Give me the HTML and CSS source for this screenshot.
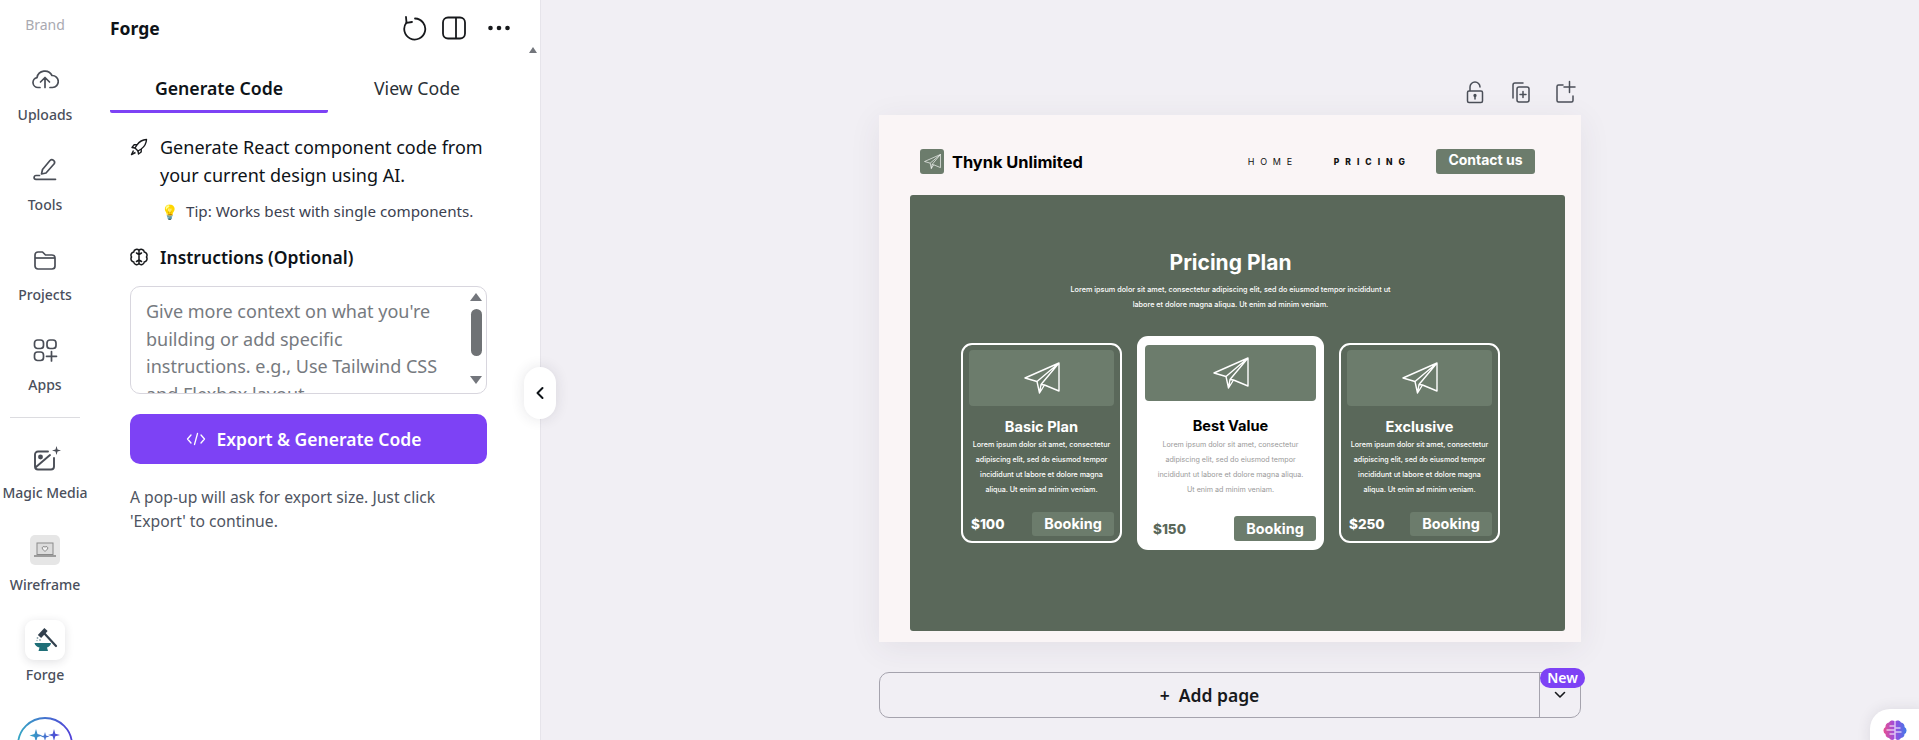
FILE: index.html
```html
<!DOCTYPE html>
<html>
  <head>
    <meta charset="utf-8" />
    <title>Forge</title>
    <link rel="stylesheet" href="styles.css">
  </head>
  <body>
    <svg class="defs" width="0" height="0">
      <symbol id="plane" viewBox="0 0 36 32">
        <path d="M35 1 1 16l12 3.500 2.500 11.500 5-8L35 29ZM35 1 13 19.500M35 1 17 22.500l3.500.5M15.500 31 17 22.500" fill="none" stroke="currentColor" stroke-width="1.400" stroke-linejoin="round" />
      </symbol>
    </svg>
    <div class="app">
      <nav class="sidebar">
        <div class="brand">Brand</div>
        <div class="side-item">
          <div class="side-icon">
            <svg width="28" height="24" viewBox="0 1 28 24" fill="none" stroke="#4a4e57" stroke-width="1.700" stroke-linecap="round" stroke-linejoin="round"><path d="M9 20.500H7a5 5 0 0 1-1-9.900A8 8 0 0 1 21 8.500a6 6 0 0 1 .5 12H19" /><path d="M14 20.500V11M9.500 15l4.500-4.500 4.500 4.500" /></svg>
          </div>
          <div class="side-label">Uploads</div>
        </div>
        <div class="side-item">
          <div class="side-icon">
            <svg width="26" height="26" viewBox="0 0 26 26" fill="none" stroke="#4a4e57" stroke-width="1.700" stroke-linecap="round" stroke-linejoin="round"><path d="M9.500 17l1-4.500L18 3.500a2.700 2.700 0 0 1 4.200 3.300L14 16Z" /><path d="M7.500 18.500H4a1.900 1.900 0 0 0 0 3.800H23.500" /></svg>
          </div>
          <div class="side-label">Tools</div>
        </div>
        <div class="side-item">
          <div class="side-icon">
            <svg width="26" height="24" viewBox="0 0 26 24" fill="none" stroke="#4a4e57" stroke-width="1.700" stroke-linejoin="round"><path d="M3 7a3 3 0 0 1 3-3h4.500l3 3H20a3 3 0 0 1 3 3v8a3 3 0 0 1-3 3H6a3 3 0 0 1-3-3Z" /><path d="M3 10h20" /></svg>
          </div>
          <div class="side-label">Projects</div>
        </div>
        <div class="side-item">
          <div class="side-icon">
            <svg width="26" height="26" viewBox="0 0 26 26" fill="none" stroke="#4a4e57" stroke-width="1.700" stroke-linecap="round"><rect x="2.500" y="3" width="9" height="8.500" rx="3" /><rect x="15" y="3" width="9" height="8.500" rx="3" /><rect x="2.500" y="15" width="9" height="8.500" rx="3" /><path d="M19.500 14.500v9.500M14.500 19.300H24.500" /></svg>
          </div>
          <div class="side-label">Apps</div>
        </div>
        <div class="side-rule"></div>
        <div class="side-item">
          <div class="side-icon">
            <svg width="26" height="26" viewBox="0 -2 26 26" fill="none" stroke="#4a4e57" stroke-width="1.900" stroke-linecap="round" stroke-linejoin="round"><path d="M16 4.500H6a3 3 0 0 0-3 3v12a3 3 0 0 0 3 3h13a3 3 0 0 0 3-3V11" /><circle cx="8.500" cy="10" r="1.500" fill="#4a4e57" /><path d="M4 20 18 8" /></svg>
            <svg class="sparkle" width="9" height="9" viewBox="0 0 9 9" fill="#4a4e57"><path d="M4.500 0 5.500 3.500 9 4.500 5.500 5.500 4.500 9 3.500 5.500 0 4.500 3.500 3.500Z" /></svg>
          </div>
          <div class="side-label">Magic Media</div>
        </div>
        <div class="side-item side-item-wire">
          <div class="side-icon">
            <div class="wire-tile">
              <svg width="24" height="18" viewBox="0 0 24 18" fill="none" stroke="#8a8a8a" stroke-width="1"><rect x="4" y="2" width="16" height="11.500" fill="#dcdcdc" /><path d="M1 15h22" stroke-width="1.600" /><path d="M12 10.500 9.500 8a1.500 1.500 0 0 1 2.500-1.800A1.500 1.500 0 0 1 14.500 8Z" fill="#f2f2f2" /></svg>
            </div>
          </div>
          <div class="side-label">Wireframe</div>
        </div>
        <div class="side-item">
          <div class="side-icon">
            <div class="forge-tile">
              <svg width="26" height="26" viewBox="0 0 26 26" fill="none"><path d="M12 6 24 19" stroke="#33404e" stroke-width="2.200" stroke-linecap="round" /><path d="M7.500 9.500 14 2.500" stroke="#33404e" stroke-width="4.500" /><path d="M2.500 16H19c0 2.500-2.500 4-4 4.500l1 3.500H6.500l1-3.500C5 20 3 18.500 2.500 16Z" fill="#1f6f78" /><circle cx="5.500" cy="11" r=".9" fill="#8fa6ad" /><circle cx="8" cy="13" r=".9" fill="#8fa6ad" /><circle cx="5" cy="13.500" r=".7" fill="#8fa6ad" /></svg>
            </div>
          </div>
          <div class="side-label">Forge</div>
        </div>
        <svg class="magic-circle" width="56" height="56" viewBox="0 0 56 56" fill="none">
          <defs><linearGradient id="ring" x1="0" x2="1"><stop offset="0" stop-color="#35a6c4" /><stop offset="1" stop-color="#5140d8" /></linearGradient></defs>
          <circle cx="28" cy="28" r="27" stroke="url(#ring)" stroke-width="1.800" />
          <path d="M19 12l1.500 5 5 1.500-5 1.500-1.500 5-1.500-5-5-1.500 5-1.500ZM28 15l1 3.500 3.500 1-3.500 1-1 3.500-1-3.500-3.500-1 3.500-1ZM37 12l1.300 4.700 4.700 1.300-4.700 1.300L37 24l-1.300-4.700L31 18l4.700-1.300Z" fill="url(#ring)" />
        </svg>
      </nav>

      <aside class="panel">
        <div class="scroll-up"></div>
        <header class="panel-head">
          <div class="panel-title">Forge</div>
          <div class="panel-actions">
            <svg width="26" height="26" viewBox="0 0 26 26" fill="none" stroke="#17191c" stroke-width="1.800" stroke-linecap="round" stroke-linejoin="round"><path d="M14 3.500a10.500 10.500 0 1 1-8.500 4" /><path d="M5 2l.5 5.800 5.500-.8" /></svg>
            <svg width="26" height="26" viewBox="0 0 26 26" fill="none" stroke="#17191c" stroke-width="1.800"><rect x="2" y="2.500" width="22" height="21" rx="5" /><path d="M15 2.500v21" /></svg>
            <svg width="26" height="26" viewBox="0 0 26 26" fill="#17191c"><circle cx="4.500" cy="13" r="2.300" /><circle cx="13" cy="13" r="2.300" /><circle cx="21.500" cy="13" r="2.300" /></svg>
          </div>
        </header>
        <div class="tabs">
          <div class="tab tab-active">Generate Code</div>
          <div class="tab">View Code</div>
        </div>
        <div class="panel-body">
          <div class="intro">
            <svg class="line-icon" width="18" height="18" viewBox="0 0 18 18" fill="none" stroke="#17191c" stroke-width="1.400" stroke-linejoin="round"><path d="M16.500 1.500c-4 .2-7 1.800-9.500 5.300L5 10l3 3 3.200-2c3.500-2.500 5.100-5.500 5.300-9.500Z" /><path d="M7 6.800H4L2 9.500l3 .5M11.200 11v3L8.500 16 8 13" /><path d="M3.500 12.500 1.500 16.500l4-2" /></svg>
            <div>Generate React component code from your current design using AI.</div>
          </div>
          <div class="tip"><span class="bulb">💡</span>Tip: Works best with single components.</div>
          <div class="instr-head">
            <svg class="line-icon" width="18" height="18" viewBox="0 0 18 18" fill="none" stroke="#17191c" stroke-width="1.500" stroke-linecap="round"><path d="M9 2.500a3 3 0 0 0-5.300 1.500A3.300 3.300 0 0 0 1.500 9a3.300 3.300 0 0 0 2.200 5A3 3 0 0 0 9 15.500 3 3 0 0 0 14.300 14a3.300 3.300 0 0 0 2.200-5 3.300 3.300 0 0 0-2.200-5A3 3 0 0 0 9 2.500ZM9 2.500v13M9 6.500 6.500 5M9 6.500 11.500 5M9 12l-2.500 1.500M9 12l2.500 1.500" /></svg>
            <div>Instructions (Optional)</div>
          </div>
          <div class="text-area">
            <div class="text-area-text">Give more context on what you're<br>building or add specific<br>instructions. e.g., Use Tailwind CSS<br>and Flexbox layout.</div>
            <div class="text-area-bar">
              <div class="arrow-up"></div>
              <div class="bar-thumb"></div>
              <div class="arrow-down"></div>
            </div>
          </div>
          <button class="export-btn">
            <svg width="20" height="16" viewBox="0 0 20 16" fill="none" stroke="#fff" stroke-width="1.300" stroke-linecap="round" stroke-linejoin="round"><path d="M5 4 1.500 8 5 12M15 4l3.500 4L15 12M11.500 2.500 8.500 13.500" /></svg>
            Export &amp; Generate Code
          </button>
          <p class="note">A pop-up will ask for export size. Just click<br>'Export' to continue.</p>
        </div>
        <div class="collapse-handle">
          <svg width="10" height="14" viewBox="0 0 10 14" fill="none" stroke="#0e1318" stroke-width="2" stroke-linecap="round" stroke-linejoin="round"><path d="M7.500 2 2.500 7l5 5" /></svg>
        </div>
      </aside>

      <main class="canvas">
        <div class="page-tools">
          <svg width="24" height="24" viewBox="0 0 24 24" fill="none" stroke="#4b4f58" stroke-width="1.500" stroke-linecap="round"><path d="M7 10.500V7a5 5 0 0 1 10 0" /><rect x="4.500" y="11" width="15" height="11.500" rx="1.500" /><circle cx="12" cy="15.500" r=".9" fill="#4b4f58" /><path d="M12 15.500v3.500" /></svg>
          <svg width="24" height="24" viewBox="0 0 24 24" fill="none" stroke="#4b4f58" stroke-width="1.500" stroke-linecap="round"><path d="M5 18V5a2 2 0 0 1 2-2h8" /><rect x="9" y="7" width="12" height="15" rx="2" /><path d="M15 11.500v6M12 14.500h6" /></svg>
          <svg width="24" height="24" viewBox="0 0 24 24" fill="none" stroke="#4b4f58" stroke-width="1.500" stroke-linecap="round"><path d="M10 5H5.500A1.500 1.500 0 0 0 4 6.500v14A1.500 1.500 0 0 0 5.500 22h13a1.500 1.500 0 0 0 1.500-1.500V16" /><path d="M16.500 1.500v11M11 7h11" /></svg>
        </div>

        <section class="page">
          <div class="site-nav">
            <div class="site-logo">
              <div class="logo-tile"><svg width="17" height="15"><use href="#plane" /></svg></div>
              <div class="logo-name">Thynk Unlimited</div>
            </div>
            <div class="site-links">
              <span class="site-link">HOME</span>
              <span class="site-link site-link-on">PRICING</span>
              <span class="contact-btn">Contact us</span>
            </div>
          </div>

          <div class="hero">
            <h1 class="hero-title">Pricing Plan</h1>
            <p class="hero-desc">Lorem ipsum dolor sit amet, consectetur adipiscing elit, sed do eiusmod tempor incididunt ut<br>labore et dolore magna aliqua. Ut enim ad minim veniam.</p>
            <div class="cards">
              <div class="card">
                <div class="card-pic"><svg width="36" height="32"><use href="#plane" /></svg></div>
                <div class="card-title">Basic Plan</div>
                <p class="card-text">Lorem ipsum dolor sit amet, consectetur<br>adipiscing elit, sed do eiusmod tempor<br>incididunt ut labore et dolore magna<br>aliqua. Ut enim ad minim veniam.</p>
                <div class="card-foot">
                  <span class="price">$100</span>
                  <span class="book-btn">Booking</span>
                </div>
              </div>
              <div class="card card-best">
                <div class="card-pic"><svg width="36" height="32"><use href="#plane" /></svg></div>
                <div class="card-title">Best Value</div>
                <p class="card-text">Lorem ipsum dolor sit amet, consectetur<br>adipiscing elit, sed do eiusmod tempor<br>incididunt ut labore et dolore magna aliqua.<br>Ut enim ad minim veniam.</p>
                <div class="card-foot">
                  <span class="price">$150</span>
                  <span class="book-btn">Booking</span>
                </div>
              </div>
              <div class="card">
                <div class="card-pic"><svg width="36" height="32"><use href="#plane" /></svg></div>
                <div class="card-title">Exclusive</div>
                <p class="card-text">Lorem ipsum dolor sit amet, consectetur<br>adipiscing elit, sed do eiusmod tempor<br>incididunt ut labore et dolore magna<br>aliqua. Ut enim ad minim veniam.</p>
                <div class="card-foot">
                  <span class="price">$250</span>
                  <span class="book-btn">Booking</span>
                </div>
              </div>
            </div>
          </div>
        </section>

        <div class="add-page">
          <div class="add-main">+&nbsp; Add page</div>
          <div class="add-more">
            <span class="new-badge">New</span>
            <svg width="12" height="8" viewBox="0 0 12 8" fill="none" stroke="#17191c" stroke-width="1.600" stroke-linecap="round" stroke-linejoin="round"><path d="M1.500 1.500 6 6l4.500-4.500" /></svg>
          </div>
        </div>

        <div class="brain-widget">
          <svg width="24" height="20" viewBox="0 0 24 20"><defs><linearGradient id="brain" x1="0" x2="1"><stop offset="0" stop-color="#e8508f" /><stop offset=".5" stop-color="#9a4ce0" /><stop offset="1" stop-color="#3f7be8" /></linearGradient></defs><path d="M11.500 1a4 4 0 0 0-5.500 1.500A4 4 0 0 0 2.500 7 4 4 0 0 0 2.500 14 4 4 0 0 0 6 18 4 4 0 0 0 11.500 19ZM12.500 1A4 4 0 0 1 18 2.500 4 4 0 0 1 21.500 7 4 4 0 0 1 21.500 14 4 4 0 0 1 18 18 4 4 0 0 1 12.500 19Z" fill="url(#brain)" /><path d="M11.500 6H6.500M11.500 10H3.500M11.500 14H6.500M12.500 8h5M12.500 12h6" stroke="#fff" stroke-width="1" /></svg>
        </div>
      </main>
    </div>
  </body>
</html>
```

FILE: styles.css
```css
* {
  box-sizing: border-box;
}

body {
  margin: 0;
  height: 740px;
  overflow: hidden;
  font-family: "Noto Sans", "Liberation Sans", sans-serif;
  color: #0e1318;
}

.defs {
  position: absolute;
}

.app {
  display: flex;
  height: 740px;
}

/* left icon rail */
.sidebar {
  width: 90px;
  height: 740px;
  overflow: hidden;
  background: #fff;
  display: flex;
  flex-direction: column;
  align-items: center;
  padding-top: 16px;
}

.brand {
  height: 18px;
  line-height: 18px;
  font-size: 14px;
  color: #a9a9b1;
  margin-bottom: 31px;
}

.side-item {
  height: 59px;
  margin-bottom: 31px;
  display: flex;
  flex-direction: column;
  align-items: center;
  gap: 11px;
  flex-shrink: 0;
}

.side-item-wire {
  margin-top: 2px;
}

.side-icon {
  height: 30px;
  display: flex;
  align-items: center;
  justify-content: center;
  position: relative;
}

.sparkle {
  position: absolute;
  right: -3px;
  top: 3px;
}

.side-label {
  height: 18px;
  line-height: 18px;
  font-size: 14px;
  font-weight: 500;
  color: #4a4f5c;
  white-space: nowrap;
}

.side-rule {
  width: 70px;
  height: 1px;
  background: #dcdce0;
  margin: -8px 0 25px;
  flex-shrink: 0;
}

.wire-tile {
  width: 30px;
  height: 30px;
  border-radius: 5px;
  background: #e6e6e6;
  display: flex;
  align-items: center;
  justify-content: center;
}

.forge-tile {
  width: 40px;
  height: 40px;
  border-radius: 9px;
  background: #fff;
  box-shadow: 0 2px 10px rgba(40, 40, 60, 0.14);
  display: flex;
  align-items: center;
  justify-content: center;
}

.magic-circle {
  margin-top: 2px;
  flex-shrink: 0;
}

/* forge panel */
.panel {
  width: 451px;
  height: 740px;
  background: #fff;
  position: relative;
  padding-left: 20px;
  border-right: 1px solid #e6e4ea;
}

.scroll-up {
  position: absolute;
  top: 47px;
  right: 3px;
  width: 0;
  height: 0;
  border: 4px solid transparent;
  border-top: 0;
  border-bottom: 6px solid #73767c;
}

.panel-head {
  height: 56px;
  display: flex;
  align-items: center;
  justify-content: space-between;
  padding-right: 28px;
}

.panel-title {
  font-size: 17.500px;
  font-weight: 700;
}

.panel-actions {
  display: flex;
  gap: 14px;
  align-items: center;
}

.panel-actions svg:last-child {
  margin-left: 5px;
}

.tabs {
  display: flex;
  margin-top: 10px;
  width: 396px;
}

.tab {
  height: 47px;
  padding-top: 6px;
  line-height: 32px;
  font-size: 17.700px;
  text-align: center;
  color: #2a3036;
  flex: 1;
}

.tab-active {
  flex: 0 0 218px;
  font-weight: 600;
  color: #0e1318;
  border-bottom: 3px solid #7d42f5;
  border-radius: 0 0 2px 2px;
}

.panel-body {
  padding: 20px 0 0 20px;
  width: 377px;
}

.intro {
  display: flex;
  gap: 12px;
  font-size: 18px;
  line-height: 28px;
}

.line-icon {
  flex-shrink: 0;
  margin-top: 5px;
}

.tip {
  margin-top: 10px;
  padding-left: 31px;
  font-size: 15.200px;
  line-height: 24px;
  color: #3b4150;
  white-space: nowrap;
}

.bulb {
  font-size: 14px;
  margin-right: 8px;
}

.instr-head {
  margin-top: 21px;
  display: flex;
  gap: 12px;
  font-size: 17.500px;
  line-height: 24px;
  font-weight: 600;
}

.instr-head .line-icon {
  margin-top: 3px;
}

.text-area {
  margin-top: 17px;
  height: 108px;
  border: 1px solid #d8d6de;
  border-radius: 10px;
  overflow: hidden;
  display: flex;
  padding-left: 15px;
}

.text-area-text {
  flex: 1;
  padding-top: 11px;
  font-size: 18px;
  line-height: 27.500px;
  color: #767a80;
}

.text-area-bar {
  width: 20px;
  padding: 6px 4px 0;
  display: flex;
  flex-direction: column;
  align-items: center;
}

.arrow-up {
  border: 6px solid transparent;
  border-top: 0;
  border-bottom: 8px solid #73767c;
}

.bar-thumb {
  width: 11px;
  height: 47px;
  margin-top: 8px;
  border-radius: 6px;
  background: #6f7275;
}

.arrow-down {
  margin-top: 20px;
  border: 6px solid transparent;
  border-bottom: 0;
  border-top: 8px solid #73767c;
}

.export-btn {
  margin-top: 20px;
  width: 100%;
  height: 50px;
  padding: 0 10px 0 0;
  border: 0;
  border-radius: 10px;
  background: #7d42f5;
  color: #fff;
  font-family: inherit;
  font-size: 17.500px;
  font-weight: 600;
  display: flex;
  align-items: center;
  justify-content: center;
  gap: 11px;
}

.note {
  margin: 21px 0 0;
  font-size: 15.700px;
  line-height: 24px;
  color: #4f5562;
  white-space: nowrap;
}

.collapse-handle {
  position: absolute;
  left: 434px;
  top: 367px;
  width: 32px;
  height: 52px;
  border-radius: 16px;
  background: #fff;
  box-shadow: 0 0 14px rgba(40, 40, 60, 0.12);
  display: flex;
  align-items: center;
  justify-content: center;
  z-index: 5;
}

/* canvas side */
.canvas {
  flex: 1;
  background: #f1eff4;
  position: relative;
  display: flex;
  flex-direction: column;
  align-items: center;
  overflow: hidden;
}

.page-tools {
  width: 702px;
  height: 35px;
  margin-top: 80px;
  display: flex;
  justify-content: flex-end;
  align-items: flex-start;
  gap: 21px;
  padding-right: 4px;
}

.page {
  width: 702px;
  height: 527px;
  background: #faf5f6;
  padding: 34px 16px 11px 31px;
  box-shadow: 0 6px 30px rgba(60, 50, 80, 0.08);
  font-family: Inter, "Liberation Sans", sans-serif;
}

.site-nav {
  height: 25px;
  margin-bottom: 21px;
  padding: 0 30px 0 10px;
  display: flex;
  align-items: center;
  justify-content: space-between;
}

.site-logo {
  display: flex;
  align-items: center;
  gap: 8px;
}

.logo-tile {
  width: 24px;
  height: 25px;
  border-radius: 3px;
  background: #6c7c6c;
  color: #fff;
  display: flex;
  align-items: center;
  justify-content: center;
}

.logo-name {
  font-size: 16.400px;
  font-weight: 700;
  color: #000;
}

.site-links {
  display: flex;
  align-items: center;
}

.site-link {
  font-size: 9px;
  letter-spacing: 5.700px;
  color: #111;
  margin-right: 36px;
}

.site-link-on {
  font-size: 8.500px;
  letter-spacing: 6px;
  font-weight: 800;
  margin-right: 25px;
}

.contact-btn {
  width: 99px;
  height: 25px;
  line-height: 22px;
  text-align: center;
  font-size: 14px;
  font-weight: 700;
  color: #fff;
  background: #6c7c6c;
  border-radius: 3px;
}

.hero {
  height: 436px;
  background: #5a685a;
  border-radius: 3px;
  padding: 53px 14px 0 0;
  text-align: center;
  color: #fff;
}

.hero-title {
  margin: 0;
  font-size: 21px;
  line-height: 30px;
  font-weight: 700;
}

.hero-desc {
  margin: 4px 0 0;
  font-size: 7.250px;
  font-weight: 500;
  line-height: 15px;
}

.cards {
  margin-top: 24px;
  display: flex;
  align-items: center;
  justify-content: center;
  gap: 15px;
}

.card {
  width: 161px;
  height: 200px;
  padding: 5px 6px;
  border: 2px solid #fff;
  border-radius: 11px;
  display: flex;
  flex-direction: column;
}

.card-pic {
  height: 56px;
  border-radius: 4px;
  background: #6c7c6c;
  color: #fff;
  display: flex;
  align-items: center;
  justify-content: center;
  flex-shrink: 0;
}

.card-title {
  margin-top: 11px;
  font-size: 14.600px;
  line-height: 20px;
  font-weight: 700;
}

.card-text {
  margin: 0;
  font-size: 7.150px;
  font-weight: 500;
  line-height: 15px;
  white-space: nowrap;
}

.card-foot {
  margin-top: 15px;
  display: flex;
  align-items: center;
  justify-content: space-between;
  padding-left: 2px;
}

.price {
  font-size: 13.500px;
  font-weight: 800;
}

.book-btn {
  width: 82px;
  height: 24px;
  line-height: 24px;
  font-size: 14.400px;
  font-weight: 700;
  color: #fff;
  background: #6c7c6c;
  border-radius: 3px;
}

.card-best {
  width: 187px;
  height: 214px;
  padding: 9px 8px;
  border: 0;
  background: #fff;
  color: #000;
}

.card-best .card-title {
  margin-top: 15px;
}

.card-best .card-text {
  margin-top: 1px;
  color: #999;
  font-weight: 400;
}

.card-best .card-foot {
  margin-top: 19px;
  padding-left: 8px;
}

.card-best .book-btn {
  height: 25px;
  line-height: 25px;
}

.card-best .price {
  color: #5a685a;
}

.add-page {
  width: 702px;
  height: 46px;
  margin-top: 30px;
  border: 1px solid #a5a3ad;
  border-radius: 10px;
  display: flex;
  flex-shrink: 0;
}

.add-main {
  flex: 1;
  line-height: 44px;
  text-align: center;
  font-size: 17.500px;
  font-weight: 600;
  color: #17191c;
}

.add-more {
  width: 41px;
  border-left: 1px solid #a5a3ad;
  position: relative;
  display: flex;
  align-items: center;
  justify-content: center;
}

.new-badge {
  position: absolute;
  left: 0;
  top: -5px;
  width: 45px;
  height: 20px;
  line-height: 19px;
  text-align: center;
  border-radius: 10px;
  background: #7d42f5;
  color: #fff;
  font-size: 14px;
  font-weight: 600;
}

.brain-widget {
  position: absolute;
  right: -6px;
  bottom: -8px;
  width: 55px;
  height: 39px;
  padding: 11px 0 0 13px;
  border-radius: 20px 0 0 0;
  background: #fff;
  box-shadow: 0 0 14px rgba(40, 40, 60, 0.1);
}
```
